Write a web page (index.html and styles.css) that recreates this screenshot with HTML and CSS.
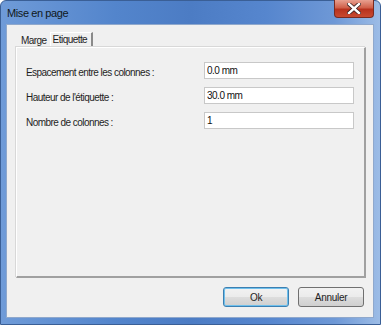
FILE: index.html
```html
<!DOCTYPE html>
<html lang="fr">
<head>
    <meta charset="UTF-8">
    <title>Mise en page</title>
    <link rel="stylesheet" href="styles.css">
</head>
<body>

    <div class="window">
        <div class="titlebar">
            <span class="title">Mise en page</span>
            <button class="close-btn" type="button">
                <svg width="14" height="11" viewBox="0 0 14 11">
                    <path d="M2 1 L12 10 M12 1 L2 10" stroke="#3a2020" stroke-width="4" stroke-linecap="square"/>
                    <path d="M2 1 L12 10 M12 1 L2 10" stroke="#ffffff" stroke-width="2.4" stroke-linecap="square"/>
                </svg>
            </button>
        </div>

        <div class="client">
            <div class="tabs">
                <div class="tab">Marge</div>
                <div class="tab active">Etiquette</div>
            </div>

            <div class="panel">
                <div class="field">
                    <label for="espacement">Espacement entre les colonnes :</label>
                    <input type="text" id="espacement" value="0.0 mm">
                </div>
                <div class="field">
                    <label for="hauteur">Hauteur de l'étiquette :</label>
                    <input type="text" id="hauteur" value="30.0 mm">
                </div>
                <div class="field">
                    <label for="colonnes">Nombre de colonnes :</label>
                    <input type="text" id="colonnes" value="1">
                </div>
            </div>

            <div class="button-row">
                <button type="button" class="btn default">Ok</button>
                <button type="button" class="btn">Annuler</button>
            </div>
        </div>
    </div>

</body>
</html>
```

FILE: styles.css
```css
body {
    margin: 0;
    font-family: "Liberation Sans", Arial, sans-serif;
    font-size: 10px;
    letter-spacing: -0.55px;
    color: #1e1e1e;
}
.window {
    width: 381px;
    height: 325px;
    box-sizing: border-box;
    display: flex;
    flex-direction: column;
    background: linear-gradient(90deg, #6f9bd8 0%, #5385cc 30%, #4c7cc4 50%, #5686ce 70%, #6e98d6 88%, #9cbce6 100%);
    border: 1px solid #3a5f96;
    border-radius: 6px 6px 0 0;
}
.titlebar {
    height: 23px;
    display: flex;
    align-items: flex-start;
    justify-content: space-between;
    padding-left: 6px;
    padding-right: 6px;
}
.title {
    font-family: "Liberation Sans", Arial, sans-serif;
    font-size: 11px;
    letter-spacing: -0.4px;
    color: #101820;
    margin-top: 6px;
}
.close-btn {
    width: 40px;
    height: 18px;
    margin-top: -1px;
    padding: 0;
    border: 1px solid #7a2a20;
    border-top: none;
    border-radius: 0 0 4px 4px;
    background: linear-gradient(#e8a090 0%, #d0604a 45%, #b8321e 55%, #c84a30 100%);
    display: flex;
    align-items: center;
    justify-content: center;
}
.client {
    flex: 1;
    margin: 0 6px 6px 5px;
    background: #f0f0f0;
    border: 1px solid #8fa8cc;
    display: flex;
    flex-direction: column;
}
.tabs {
    display: flex;
    margin: 8px 0 0 9px;
    height: 14px;
    align-items: flex-end;
}
.tab {
    padding: 0 3px 0 5px;
    height: 13px;
    line-height: 13px;
}
.tab.active {
    height: 15px;
    line-height: 14px;
    padding: 0 4px 0 2px;
    border-left: 1px solid #ffffff;
    border-top: 1px solid #ffffff;
    border-right: 2px solid #8a8a8a;
    margin-bottom: -1px;
    background: #f0f0f0;
}
.panel {
    margin-left: 9px;
    width: 350px;
    height: 231px;
    box-sizing: border-box;
    border-top: 1px solid #ffffff;
    border-left: 1px solid #ffffff;
    border-right: 2px solid #a0a0a0;
    border-bottom: 2px solid #a0a0a0;
    box-shadow: -1px -1px 0 #d8d8d8;
    padding: 14px 0 0 9px;
    display: flex;
    flex-direction: column;
    gap: 8px;
}
.field {
    display: flex;
    align-items: center;
    height: 17px;
}
label {
    width: 178px;
    padding-top: 3px;
}
input {
    width: 150px;
    height: 17px;
    box-sizing: border-box;
    border: 1px solid #c8c8c8;
    background: #ffffff;
    padding: 0 2px;
    font-family: "Liberation Sans", Arial, sans-serif;
    font-size: 10px;
    letter-spacing: -0.5px;
    color: #111111;
}
.button-row {
    display: flex;
    justify-content: flex-end;
    gap: 9px;
    margin-top: 9px;
    margin-right: 9px;
}
.btn {
    width: 66px;
    height: 20px;
    padding: 0;
    border: 1px solid #707070;
    border-radius: 3px;
    background: linear-gradient(#f2f2f2 0%, #ebebeb 50%, #dddddd 51%, #cfcfcf 100%);
    font-family: "Liberation Sans", Arial, sans-serif;
    font-size: 10px;
    letter-spacing: -0.3px;
    color: #1e1e1e;
}
.btn.default {
    border-color: #3c7fb1;
    box-shadow: inset 0 0 0 1px #6fc0ec;
}
```
